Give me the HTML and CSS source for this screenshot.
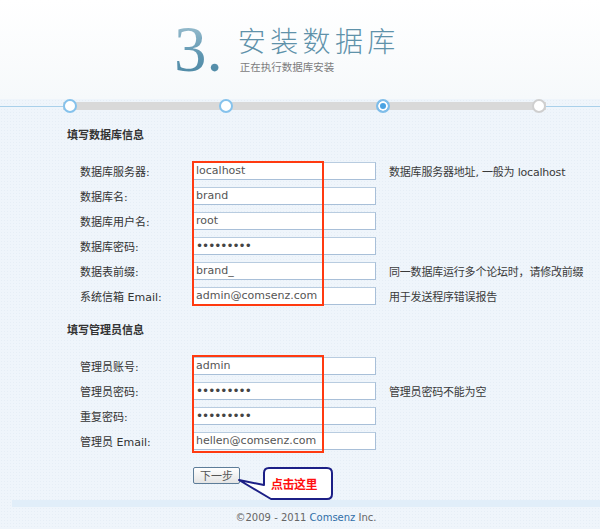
FILE: index.html
```html
<!DOCTYPE html>
<html lang="zh-CN">
<head>
<meta charset="utf-8">
<title>安装数据库</title>
<link rel="stylesheet" href="styles.css">
</head>
<body>
<div class="page">
  <header class="header">
    <div class="step-num">3.</div>
    <div class="step-text">
      <h1 class="step-title">安装数据库</h1>
      <p class="step-sub">正在执行数据库安装</p>
    </div>
  </header>

  <div class="progress">
    <div class="track">
      <span class="dot done"></span>
      <span class="dot done"></span>
      <span class="dot current"></span>
      <span class="dot todo"></span>
    </div>
  </div>

  <main class="main">
    <h2 class="sec-title">填写数据库信息</h2>
    <div class="group">
      <div class="row"><label class="lbl">数据库服务器:</label><input class="field" type="text" value="localhost"><span class="help">数据库服务器地址, 一般为 localhost</span></div>
      <div class="row"><label class="lbl">数据库名:</label><input class="field" type="text" value="brand"></div>
      <div class="row"><label class="lbl">数据库用户名:</label><input class="field" type="text" value="root"></div>
      <div class="row"><label class="lbl">数据库密码:</label><input class="field" type="password" value="123456789"></div>
      <div class="row"><label class="lbl">数据表前缀:</label><input class="field" type="text" value="brand_"><span class="help">同一数据库运行多个论坛时，请修改前缀</span></div>
      <div class="row"><label class="lbl">系统信箱 Email:</label><input class="field" type="text" value="admin@comsenz.com"><span class="help">用于发送程序错误报告</span></div>
      <div class="redbox box1"></div>
    </div>

    <h2 class="sec-title sec2">填写管理员信息</h2>
    <div class="group">
      <div class="row"><label class="lbl">管理员账号:</label><input class="field" type="text" value="admin"></div>
      <div class="row"><label class="lbl">管理员密码:</label><input class="field" type="password" value="123456789"><span class="help">管理员密码不能为空</span></div>
      <div class="row"><label class="lbl">重复密码:</label><input class="field" type="password" value="123456789"></div>
      <div class="row"><label class="lbl">管理员 Email:</label><input class="field" type="text" value="hellen@comsenz.com"></div>
      <div class="redbox box2"></div>
    </div>

    <div class="actions">
      <button class="btn" type="button">下一步</button>
      <div class="callout">
        <svg class="bubble" width="106" height="40" viewBox="0 0 106 40">
          <path d="M39,4 H97 Q102,4 102,9 V30 Q102,35 97,35 H41 L9,16 L34,21 V9 Q34,4 39,4 Z" fill="#ffffff" stroke="#1c1f86" stroke-width="2" stroke-linejoin="round"/>
        </svg>
        <span class="callout-text">点击这里</span>
      </div>
    </div>
  </main>

  <div class="strip"></div>
  <footer class="footer">©2009 - 2011 <a class="brand" href="#">Comsenz</a> Inc.</footer>
</div>
</body>
</html>
```

FILE: styles.css
```css
html, body {
  margin: 0;
  padding: 0;
}
body {
  width: 600px;
  height: 529px;
  overflow: hidden;
  background: #eff5fb;
  font-family: "DejaVu Sans", "Noto Sans CJK SC", sans-serif;
  color: #333;
}
.page {
  width: 600px;
  height: 529px;
  background-color: #eff5fb;
  background-image: radial-gradient(#e6eef6 0.6px, transparent 0.8px);
  background-size: 3px 3px;
}

/* header */
.header {
  height: 99px;
  box-sizing: border-box;
  display: flex;
  align-items: flex-start;
  padding: 16px 0 0 174px;
  background: linear-gradient(#ffffff, #f6f9fb);
}
.step-num {
  font-family: "Liberation Serif", serif;
  font-size: 65px;
  line-height: 66px;
  letter-spacing: 0;
  background: linear-gradient(#a9c8d6, #5d95b0 60%, #4a86a3);
  -webkit-background-clip: text;
  background-clip: text;
  color: transparent;
}
.step-text {
  margin-left: 15px;
  padding-top: 10px;
}
.step-title {
  margin: 0;
  font-family: "Noto Sans CJK SC", sans-serif;
  font-weight: 300;
  font-size: 28px;
  line-height: 28px;
  letter-spacing: 4.4px;
  color: #5f92aa;
}
.step-sub {
  margin: 7px 0 0 2px;
  font-family: "Noto Sans CJK SC", sans-serif;
  font-size: 10.5px;
  line-height: 12px;
  color: #7c7c7c;
}

/* progress */
.progress {
  height: 14px;
  background: linear-gradient(transparent 7px, #a9d0ea 7px, #a9d0ea 8px, transparent 8px);
}
.track {
  margin-left: 63px;
  width: 483px;
  height: 14px;
  display: flex;
  justify-content: space-between;
  align-items: center;
  background: linear-gradient(transparent 3px, #d9d9d9 3px, #d9d9d9 11px, transparent 11px);
}
.dot {
  width: 14px;
  height: 14px;
  box-sizing: border-box;
  border-radius: 50%;
  background: #fff;
  border: 2px solid #85c2ec;
}
.dot.current {
  background: #4ba3e3;
  box-shadow: inset 0 0 0 2px #fff;
  border-color: #7fbde9;
}
.dot.todo {
  border-color: #cfcfcf;
}

/* main form */
.main {
  padding-left: 67px;
}
.sec-title {
  margin: 14px 0 0;
  font-family: "Noto Sans CJK SC", sans-serif;
  font-size: 11px;
  line-height: 14px;
  font-weight: 700;
  color: #333;
}
.sec-title.sec2 {
  margin-top: 14px;
}
.group {
  position: relative;
  margin-top: 17px;
}
.row {
  height: 25px;
  display: flex;
  align-items: center;
}
.lbl {
  width: 126px;
  flex: none;
  box-sizing: border-box;
  padding-left: 13px;
  font-size: 11px;
  color: #333;
  white-space: nowrap;
}
.field {
  width: 183px;
  height: 18px;
  flex: none;
  box-sizing: border-box;
  margin: 0;
  padding: 0 0 0 2px;
  border: 1px solid #a8bfd8;
  border-top-color: #b8cce0;
  background: #fff;
  font-family: "DejaVu Sans", sans-serif;
  font-size: 11px;
  color: #555;
  outline: none;
}
.field[type="password"] {
  font-size: 12px;
  letter-spacing: -1px;
  color: #444;
}
.help {
  margin-left: 13px;
  font-size: 11px;
  letter-spacing: -0.2px;
  color: #3a3a3a;
  white-space: nowrap;
}
.redbox {
  position: absolute;
  left: 125px;
  width: 132px;
  box-sizing: border-box;
  border: 2px solid #ff3a10;
}
.box1 {
  top: 3px;
  height: 145px;
}
.box2 {
  top: 2px;
  height: 98px;
}

/* actions */
.actions {
  position: relative;
  margin-top: 12px;
  padding-left: 126px;
  height: 17px;
}
.btn {
  width: 47px;
  height: 17px;
  margin: 0;
  padding: 0;
  border: 1px solid #5d7d99;
  border-radius: 2px;
  background: linear-gradient(#ffffff, #e4e4e4);
  font-family: "Noto Sans CJK SC", sans-serif;
  font-size: 11px;
  line-height: 14px;
  color: #555;
}
.callout {
  position: absolute;
  left: 163px;
  top: -1px;
  width: 106px;
  height: 40px;
}
.bubble {
  display: block;
}
.callout-text {
  position: absolute;
  left: 41px;
  top: 12px;
  font-family: "Noto Sans CJK SC", sans-serif;
  font-size: 12px;
  line-height: 16px;
  font-weight: 700;
  color: #ff1010;
  letter-spacing: -0.5px;
}

/* footer */
.strip {
  margin: 18px 0 0 12px;
  height: 7px;
  background: #e1eef9;
}
.footer {
  height: 22px;
  line-height: 22px;
  text-align: center;
  font-size: 10px;
  color: #666;
  padding-left: 12px;
}
.brand {
  color: #2f6ea8;
  text-decoration: none;
}
```
